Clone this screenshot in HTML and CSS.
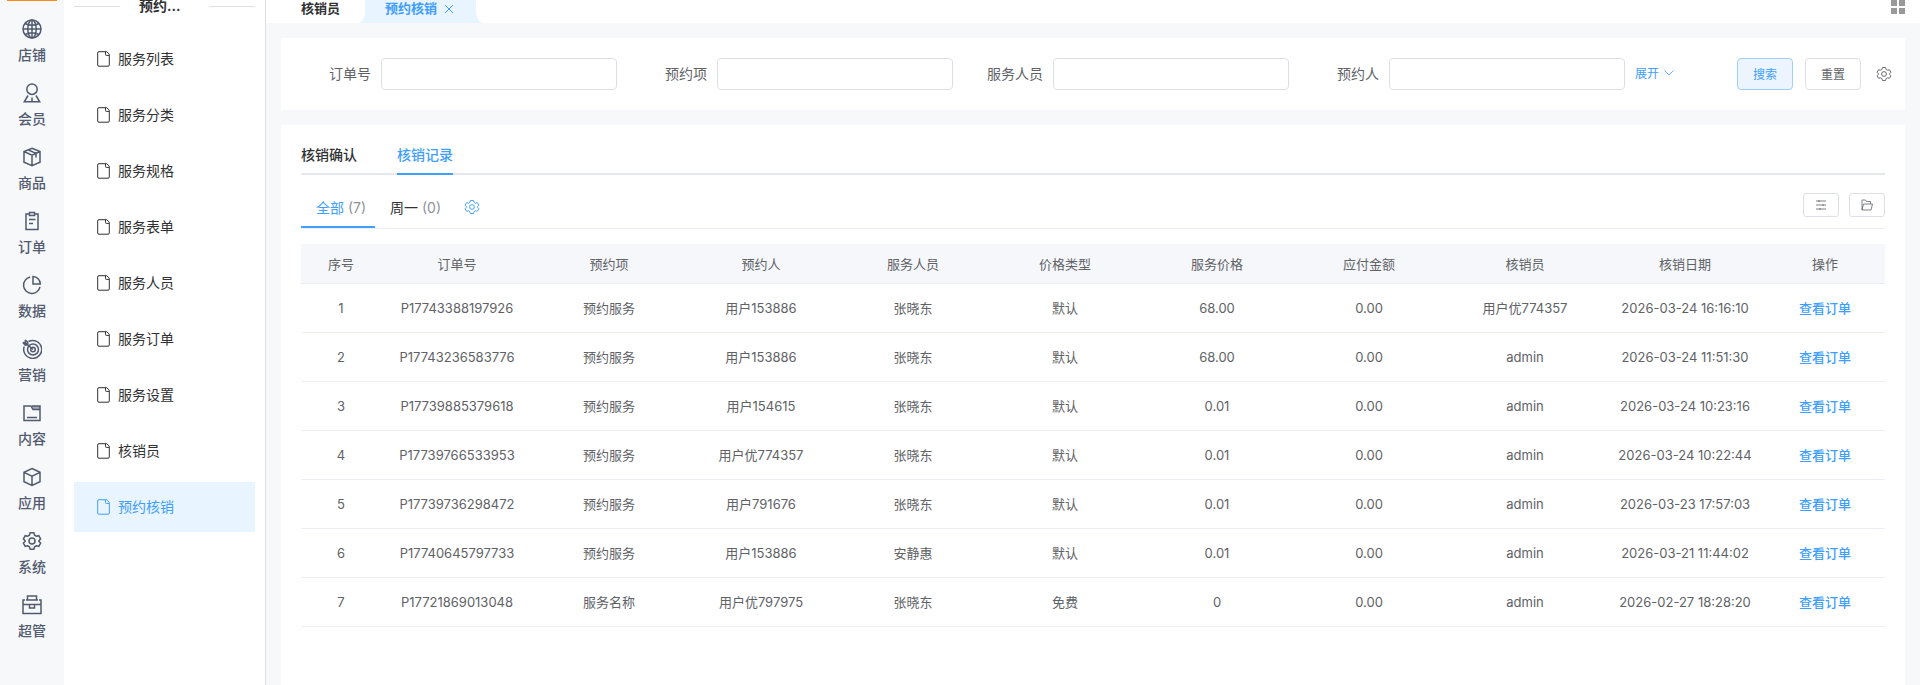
FILE: index.html
```
<!DOCTYPE html>
<html lang="zh-CN">
<head>
    <meta charset="UTF-8">
    <meta name="viewport" content="width=device-width, initial-scale=1.0">
    <title>预约核销</title>
    <link rel="stylesheet" href="styles.css">
</head>
<body>
    <svg class="sprite" aria-hidden="true">
        <symbol id="i-file" viewBox="0 0 13 16">
            <path d="M2 .7h7.800l2.500 2.600V14a1.200 1.200 0 0 1-1.200 1.200H2A1.200 1.200 0 0 1 .7 14V2A1.200 1.200 0 0 1 2 .7z M8.500 1v2.600a.8.8 0 0 0 .8.8h2.800"/>
        </symbol>
        <symbol id="i-gear" viewBox="0 0 20 20">
            <path d="M8.200 1.800h3.600l.8 2.400 1.700 1 2.500-.5 1.800 3.100-1.700 1.900v.6l1.700 1.900-1.800 3.100-2.500-.5-1.700 1-.8 2.400H8.200l-.8-2.400-1.700-1-2.500.5-1.800-3.100 1.700-1.900v-.6L1.400 7.800l1.800-3.100 2.500.5 1.700-1z"/>
            <circle cx="10" cy="10" r="3"/>
        </symbol>
    </svg>

    <nav class="main-nav">
        <div class="logo"></div>
        <a href="#"><svg viewBox="0 0 20 20"><circle cx="10" cy="10" r="9"/><ellipse cx="10" cy="10" rx="4.200" ry="9"/><path d="M3 4.500q7 3.500 14 0M3 15.500q7-3.500 14 0M1 10h18M10 1v18"/></svg>店铺</a>
        <a href="#"><svg viewBox="0 0 20 20"><circle cx="10" cy="6.200" r="5.200"/><path d="M6 12.500L2.300 18.800h15.400L14 12.500M10 14.500v4"/></svg>会员</a>
        <a href="#"><svg viewBox="0 0 20 20"><path d="M10 1.200l8 3.300v10.800l-8 3.500-8-3.500V4.500zM2 4.500l8 3.700 8-3.700M10 8.200v10.600M6 2.800l8 3.600v4"/></svg>商品</a>
        <a href="#"><svg viewBox="0 0 20 20"><path d="M7 3H4v15.500h12V3h-3M7.500 1.500h5v3h-5zM7 8.500h6.500M7 12.500h4"/></svg>订单</a>
        <a href="#"><svg viewBox="0 0 20 20"><path d="M8.200 2a8.300 8.300 0 1 0 9.800 9.800M11 1.500V9h7.300A7.600 7.600 0 0 0 11 1.500z"/></svg>数据</a>
        <a href="#"><svg viewBox="0 0 20 20"><path d="M6.500 2.500A9 9 0 1 1 2.200 7.500"/><circle cx="11" cy="10.500" r="5.500"/><circle cx="11" cy="10.500" r="2.300"/><path d="M11 10.500L3.500 4M.8 3.500l2.700.5L3.200 1M.8 3.500l2.500 2.600 2.500-.3-.2-2.600L3.200 1"/></svg>营销</a>
        <a href="#"><svg viewBox="0 0 20 20"><path d="M2 17.500V3h7l2 3.500h7v11zM5 14.500h10M10 3h8v4"/><path class="shade" d="M10 3h8v3.500h-6.500z"/></svg>内容</a>
        <a href="#"><svg viewBox="0 0 20 20"><path d="M10 1.500l8 3.800v9.400l-8 3.800-8-3.800V5.300zM2 5.300l8 3.900 8-3.900M10 9.200v9.300"/></svg>应用</a>
        <a href="#"><svg><use href="#i-gear"/></svg>系统</a>
        <a href="#"><svg viewBox="0 0 20 20"><path d="M5.500 5V1h9v4M3 5H1v13.500h18V5h-2M4 5h12M1 9.500h18M7.500 9.500v3.500h5V9.500"/></svg>超管</a>
    </nav>

    <aside class="sub-nav">
        <h2>预约...</h2>
        <a href="#"><svg><use href="#i-file"/></svg>服务列表</a>
        <a href="#"><svg><use href="#i-file"/></svg>服务分类</a>
        <a href="#"><svg><use href="#i-file"/></svg>服务规格</a>
        <a href="#"><svg><use href="#i-file"/></svg>服务表单</a>
        <a href="#"><svg><use href="#i-file"/></svg>服务人员</a>
        <a href="#"><svg><use href="#i-file"/></svg>服务订单</a>
        <a href="#"><svg><use href="#i-file"/></svg>服务设置</a>
        <a href="#"><svg><use href="#i-file"/></svg>核销员</a>
        <a href="#" class="active"><svg><use href="#i-file"/></svg>预约核销</a>
    </aside>

    <div class="page">
        <header class="page-tabs">
            <a href="#" class="page-tab">核销员</a>
            <a href="#" class="page-tab active">预约核销<svg viewBox="0 0 8 8"><path d="M0 0l8 8M8 0L0 8"/></svg></a>
            <button class="grid-btn" aria-label="更多"><i></i><i></i><i></i><i></i></button>
        </header>

        <form class="card search">
            <div class="field"><label for="orderNo">订单号</label><input type="text" id="orderNo"></div>
            <div class="field"><label for="item">预约项</label><input type="text" id="item"></div>
            <div class="field"><label for="staff">服务人员</label><input type="text" id="staff"></div>
            <div class="field"><label for="customer">预约人</label><input type="text" id="customer"></div>
            <div class="actions">
                <a href="#" class="expand">展开<svg viewBox="0 0 10 6"><path d="M.5 .5L5 5l4.500-4.500"/></svg></a>
                <button type="button" class="btn primary">搜索</button>
                <button type="button" class="btn">重置</button>
                <button type="button" class="icon-btn" aria-label="设置"><svg><use href="#i-gear"/></svg></button>
            </div>
        </form>

        <main class="card content">
            <div class="tabs">
                <a href="#">核销确认</a>
                <a href="#" class="active">核销记录</a>
            </div>
            <div class="filters">
                <a href="#" class="filter active">全部 <span>(7)</span></a>
                <a href="#" class="filter">周一 <span>(0)</span></a>
                <button class="icon-btn blue" aria-label="设置"><svg><use href="#i-gear"/></svg></button>
                <div class="tools">
                    <button aria-label="筛选"><svg viewBox="0 0 12 12"><path d="M1 2h10M1 6h10M1 10h10M4 1v2M8 5v2M5 9v2"/></svg></button>
                    <button aria-label="文件夹"><svg viewBox="0 0 12 12"><path d="M1 11V1h3.500l1 1.500h4V5M1 11h9l1.500-6H2.500z"/></svg></button>
                </div>
            </div>
            <table>
                <colgroup>
                    <col class="col-index">
                    <col span="7">
                    <col class="col-wide" span="2">
                    <col class="col-action">
                </colgroup>
                <thead>
                    <tr><th>序号</th><th>订单号</th><th>预约项</th><th>预约人</th><th>服务人员</th><th>价格类型</th><th>服务价格</th><th>应付金额</th><th>核销员</th><th>核销日期</th><th>操作</th></tr>
                </thead>
                <tbody id="records"></tbody>
            </table>
        </main>
    </div>

    <script>
        const records = [
            ["P17743388197926", "预约服务", "用户153886", "张晓东", "默认", "68.00", "0.00", "用户优774357", "2026-03-24 16:16:10"],
            ["P17743236583776", "预约服务", "用户153886", "张晓东", "默认", "68.00", "0.00", "admin", "2026-03-24 11:51:30"],
            ["P17739885379618", "预约服务", "用户154615", "张晓东", "默认", "0.01", "0.00", "admin", "2026-03-24 10:23:16"],
            ["P17739766533953", "预约服务", "用户优774357", "张晓东", "默认", "0.01", "0.00", "admin", "2026-03-24 10:22:44"],
            ["P17739736298472", "预约服务", "用户791676", "张晓东", "默认", "0.01", "0.00", "admin", "2026-03-23 17:57:03"],
            ["P17740645797733", "预约服务", "用户153886", "安静惠", "默认", "0.01", "0.00", "admin", "2026-03-21 11:44:02"],
            ["P17721869013048", "服务名称", "用户优797975", "张晓东", "免费", "0", "0.00", "admin", "2026-02-27 18:28:20"]
        ];

        document.getElementById('records').innerHTML = records.map((row, index) => `
            <tr>
                <td>${index + 1}</td>
                ${row.map(cell => `<td>${cell}</td>`).join('')}
                <td><a href="#">查看订单</a></td>
            </tr>
        `).join('');
    </script>
</body>
</html>
```
FILE: styles.css
```
* { box-sizing: border-box; }
body { display: flex; min-height: 100vh; margin: 0; background: #f7f8fa; color: #606266; font-family: Inter, "Noto Sans CJK SC", sans-serif; font-size: 14px; line-height: 20px; }
a { color: inherit; text-decoration: none; }
button { padding: 0; border: none; background: none; font: inherit; color: inherit; cursor: pointer; }
svg { fill: none; stroke: currentColor; flex-shrink: 0; }
.sprite { position: absolute; width: 0; height: 0; }

.main-nav { flex: 0 0 64px; background: #f7f8fa; color: #515a6e; font-weight: 500; }
.main-nav a { display: flex; flex-direction: column; align-items: center; gap: 6px; height: 64px; padding-top: 9px; }
.main-nav svg { width: 20px; height: 20px; stroke-width: 1.5; }
.main-nav .shade { fill: currentColor; stroke: none; opacity: 0.5; }
.logo { height: 1px; margin: 0 7px 9px; background: #fa8c16; }

.sub-nav { flex: 0 0 202px; padding: 0 10px; background: #fff; border-right: 1px solid #dcdfe6; color: #303133; }
.sub-nav h2 { display: flex; align-items: center; gap: 19px; height: 12px; margin: 0 0 22px; font-size: 14px; font-weight: 600; }
.sub-nav h2::before, .sub-nav h2::after { content: ""; width: 46px; height: 1px; background: #dcdfe6; }
.sub-nav h2::after { margin-left: auto; }
.sub-nav a { display: flex; align-items: center; gap: 8px; height: 50px; margin-bottom: 6px; padding-left: 23px; }
.sub-nav svg { width: 13px; height: 16px; }
.sub-nav .active { background: #e8f4ff; color: #409eff; }

.page { flex: 1; min-width: 0; display: flex; flex-direction: column; }
.page-tabs { display: flex; height: 23px; padding: 0 15px; background: #fff; font-size: 13px; font-weight: 700; line-height: 16px; color: #303133; }
.page-tab { padding: 0 20px; }
.page-tab.active { position: relative; display: flex; gap: 8px; margin-left: 5px; padding-right: 23px; background: #e8f4ff; color: #409eff; }
.page-tab svg { width: 8px; height: 8px; margin-top: 5px; }
/* curved feet of the active tab */
.page-tab.active::before, .page-tab.active::after { content: ""; position: absolute; bottom: 0; width: 8px; height: 12px; }
.page-tab.active::before { right: 100%; background: radial-gradient(ellipse at 0 0, transparent 70%, #e8f4ff 72%); }
.page-tab.active::after { left: 100%; background: radial-gradient(ellipse at 100% 0, transparent 70%, #e8f4ff 72%); }
.grid-btn { display: grid; grid-template-columns: 6px 6px; grid-template-rows: 6px 6px; gap: 2px; height: 14px; margin-left: auto; }
.grid-btn i { background: #999; }

.card { margin: 15px 15px 0; background: #fff; }
.search { display: flex; align-items: center; height: 72px; }
.field { display: flex; align-items: center; flex: 1 1 336px; }
.field label { flex: 0 0 100px; padding-right: 10px; text-align: right; }
.field input { flex: 1; min-width: 0; height: 32px; border: 1px solid #dcdfe6; border-radius: 4px; }
.actions { display: flex; align-items: center; gap: 12px; flex: 0 0 280px; padding: 0 13px 0 10px; font-size: 12px; }
.expand { display: flex; align-items: center; gap: 5px; margin-right: auto; color: #409eff; }
.expand svg { width: 10px; height: 6px; margin-bottom: 3px; stroke-width: 0.8; }
.btn { width: 56px; height: 32px; padding-top: 2px; background: #fff; border: 1px solid #dcdfe6; border-radius: 4px; }
.btn.primary { background: #ecf5ff; border-color: #a0cfff; color: #409eff; }
.icon-btn { display: flex; margin-left: 3px; }
.icon-btn svg { width: 16px; height: 16px; stroke-width: 1.2; }
.icon-btn.blue { margin-left: 14px; color: #409eff; }

.content { flex: 1; padding: 15px 20px; }
.tabs { display: flex; gap: 40px; height: 35px; box-shadow: inset 0 -2px #e4e7ed; color: #303133; font-weight: 500; line-height: 30px; }
.tabs .active { color: #409eff; border-bottom: 2px solid #409eff; }
.filters { display: flex; align-items: center; height: 54px; padding-top: 10px; border-bottom: 1px solid #ebeef5; color: #303133; }
.filter { height: 43px; padding: 0 9px 0 15px; line-height: 45px; }
.filter span { color: #909399; }
.filter.active { color: #409eff; border-bottom: 2px solid #409eff; }
.tools { display: flex; gap: 10px; margin: 0 0 4px auto; }
.tools button { display: flex; align-items: center; justify-content: center; width: 36px; height: 24px; border: 1px solid #dcdfe6; border-radius: 3px; color: #606266; }
.tools svg { width: 12px; height: 12px; stroke-width: 0.8; }

table { width: 100%; margin-top: 15px; table-layout: fixed; border-collapse: separate; border-spacing: 0; font-size: 13px; text-align: center; }
th, td { padding: 0; border-bottom: 1px solid #ebeef5; white-space: nowrap; }
th { height: 40px; background: #f5f7fa; font-weight: 400; }
td { height: 49px; }
td a { color: #409eff; font-weight: 500; }
.col-index { width: 80px; }
.col-wide { width: 160px; }
.col-action { width: 120px; }
```
